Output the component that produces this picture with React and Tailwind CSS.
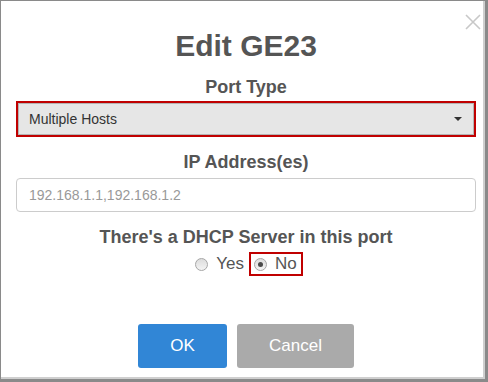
import React from "react";

function Radio({ checked }) {
  return (
    <span className="w-[13px] h-[13px] rounded-full border border-[#a6a6a6] bg-gradient-to-b from-[#dcdcdc] to-[#f4f4f4] flex items-center justify-center shrink-0">
      {checked && <span className="w-[5px] h-[5px] rounded-full bg-[#4a4a4a]" />}
    </span>
  );
}

export default function App() {
  const font = { fontFamily: '"Liberation Sans", Arial, sans-serif' };
  return (
    <div className="w-[488px] h-[382px] bg-[#8a8a8a] pl-px pt-px pr-[3px] pb-[3px]" style={font}>
      <div className="w-full h-full bg-[#cfcfcf] pr-[2px] pb-[2px]">
        <div className="w-full h-full bg-white relative">
          <svg className="absolute left-[464px] top-[13px]" width="16" height="16" viewBox="0 0 16 16">
            <path d="M1 1 L15 15 M15 1 L1 15" stroke="#c8c8c8" strokeWidth="1.6" fill="none" />
          </svg>
          <div className="ml-[15px] w-[460px] flex flex-col">
            <div className="mt-[30px] h-[30px] leading-[30px] text-[30px] font-bold text-[#555] text-center">
              Edit GE23
            </div>
            <div className="mt-[17px] h-[18px] leading-[18px] text-[18px] font-bold text-[#555] text-center">
              Port Type
            </div>
            <div className="mt-[5px] h-[36px] border-2 border-[#c00000]">
              <div className="h-full border border-[#b4b4b4] bg-[#e6e6e6] flex items-center justify-between pl-[10px] pr-[11px]">
                <span className="text-[14px] text-[#333]">Multiple Hosts</span>
                <span className="w-0 h-0 border-x-[4px] border-x-transparent border-t-[4px] border-t-[#333]" />
              </div>
            </div>
            <div className="mt-[16px] h-[18px] leading-[18px] text-[18px] font-bold text-[#555] text-center">
              IP Address(es)
            </div>
            <div className="mt-[7px] h-[34px] border border-[#cccccc] rounded-[4px] flex items-center pl-3">
              <span className="text-[14px] text-[#999]">192.168.1.1,192.168.1.2</span>
            </div>
            <div className="mt-[16px] h-[18px] leading-[18px] text-[18px] font-bold text-[#555] text-center">
              There's a DHCP Server in this port
            </div>
            <div className="mt-[6px] h-[24px] flex items-center justify-center pl-[6px]">
              <div className="flex items-center">
                <Radio />
                <span className="ml-[8px] text-[17px] text-[#555]">Yes</span>
              </div>
              <div className="ml-[5px] h-[24px] border-2 border-[#c00000] flex items-center pl-[3px] pr-[4px]">
                <Radio checked />
                <span className="ml-[8px] text-[17px] text-[#555]">No</span>
              </div>
            </div>
            <div className="mt-[48px] flex justify-center gap-[10px]">
              <div className="w-[89px] h-[44px] rounded-[3px] bg-[#3186d6] text-white text-[17px] flex items-center justify-center">
                OK
              </div>
              <div className="w-[117px] h-[44px] rounded-[3px] bg-[#aaaaaa] text-white text-[17px] flex items-center justify-center">
                Cancel
              </div>
            </div>
          </div>
        </div>
      </div>
    </div>
  );
}
